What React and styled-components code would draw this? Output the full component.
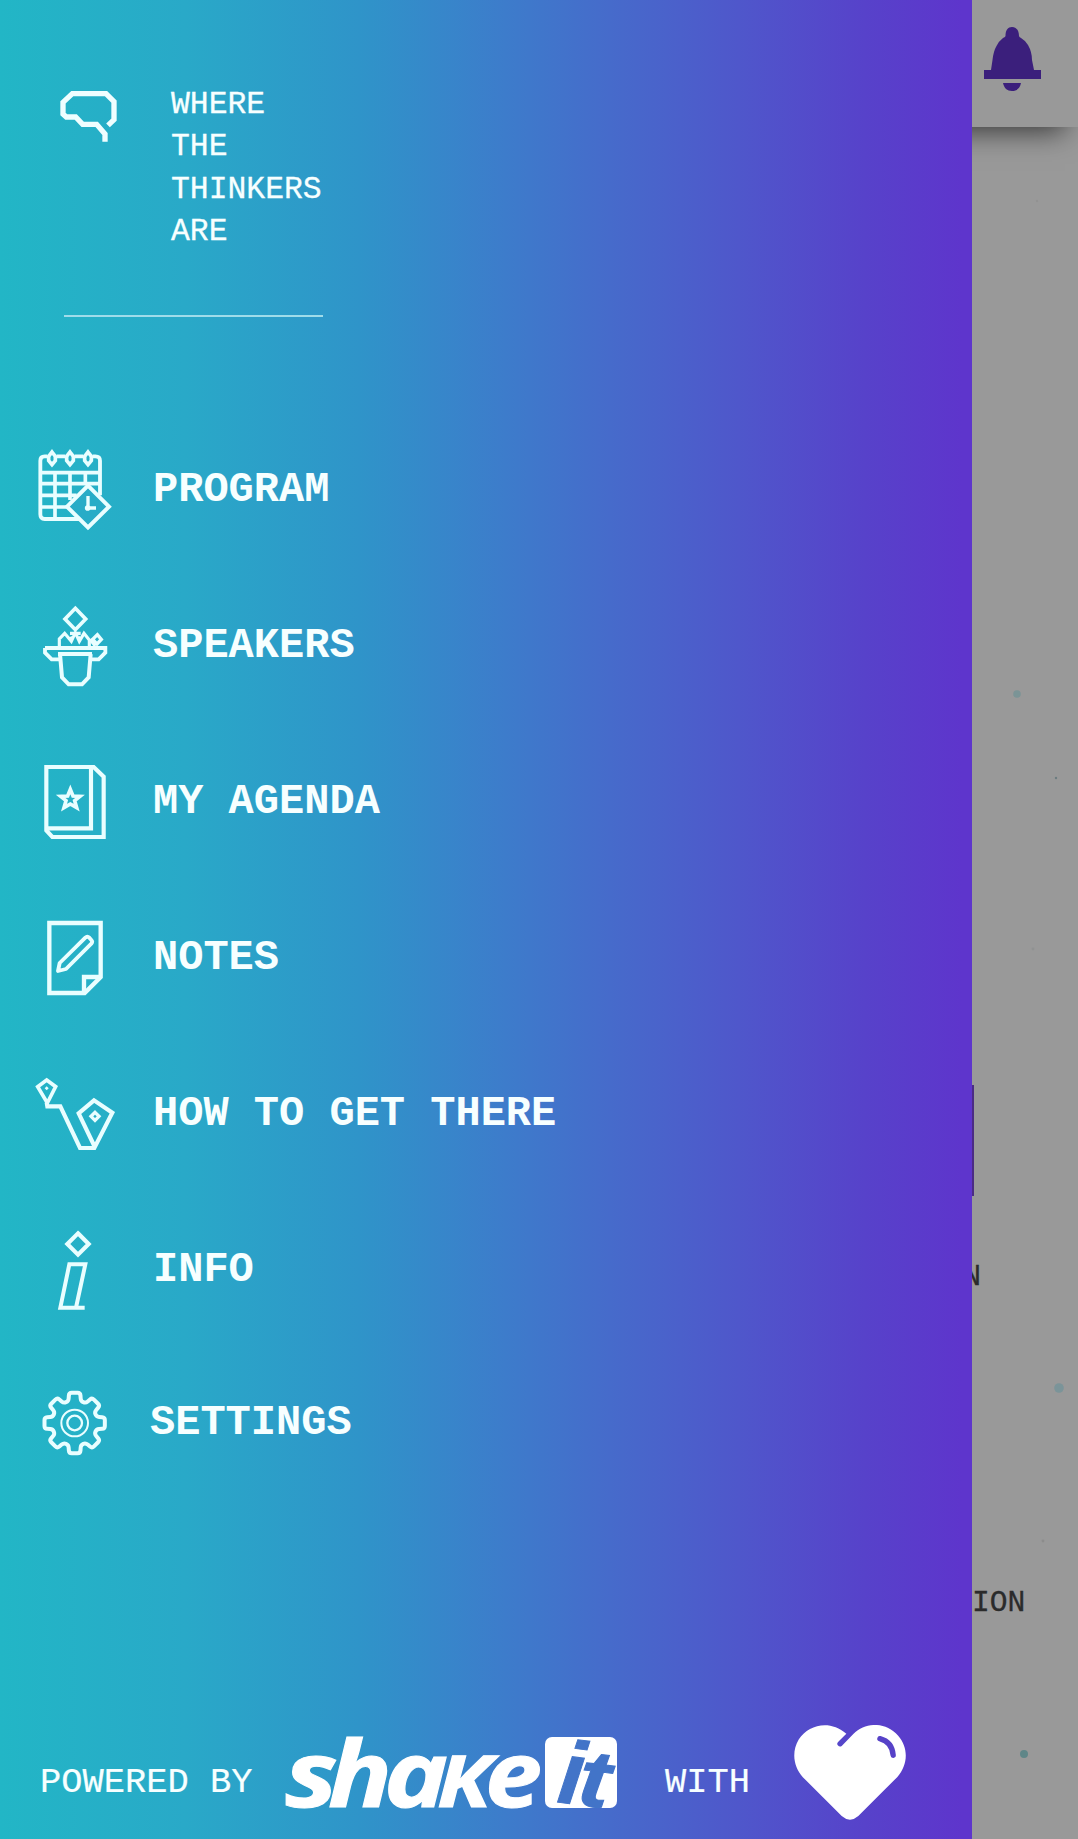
import React from "react";
import styled, { createGlobalStyle } from "styled-components";

const GlobalStyle = createGlobalStyle`
  html, body { margin: 0; padding: 0; background: #999; }
  * { box-sizing: border-box; }
`;

const mono = `"Liberation Mono", "Courier New", monospace`;

const Screen = styled.div`
  display: grid;
  grid-template-columns: 972px 1fr;
  width: 1078px;
  height: 1839px;
  overflow: hidden;
  background: #999;
  font-family: ${mono};
`;

const Drawer = styled.nav`
  position: relative;
  z-index: 2;
  display: flex;
  flex-direction: column;
  height: 1839px;
  color: #f7ffff;
  background: linear-gradient(90deg, #22b6c6 0%, #29a9c8 19%, #2f94c9 37%, #3d7ccb 52%, #4769cb 64%, #4f57cb 76%, #5742ca 89%, #5e35cc 99%);
`;

const Brand = styled.header`
  display: flex;
  align-items: flex-start;
  gap: 54px;
  width: 323px;
  height: 317px;
  margin-left: 60px;
  padding-top: 84px;
`;

const BrandIcon = styled.svg`
  flex: none;
  width: 57px;
  height: 52px;
  margin-top: 6px;
`;

const Tagline = styled.p`
  margin: 0;
  width: 160px;
  font-size: 31.4px;
  line-height: 42.3px;
  -webkit-text-stroke: 0.3px currentColor;
`;

const Divider = styled.hr`
  width: 259px;
  height: 2px;
  margin: -2px 0 0 64px;
  border: 0;
  background: #9fdcea;
`;

const Menu = styled.ul`
  list-style: none;
  margin: 92px 0 0;
  padding: 0 0 0 30px;
`;

const Item = styled.li`
  display: flex;
  align-items: center;
  gap: ${(p) => (p.$last ? 30 : 33)}px;
  height: ${(p) => (p.$last ? 150 : 156)}px;
`;

const ItemIcon = styled.svg`
  flex: none;
  width: 90px;
  height: 90px;
  overflow: visible;
  fill: none;
  stroke: #e9feff;
  stroke-width: 12.5;
`;

const Label = styled.span`
  padding-top: 5px;
  font-size: 42px;
  font-weight: 700;
  line-height: 48px;
  white-space: pre;
`;

const Footer = styled.footer`
  display: flex;
  align-items: flex-start;
  height: 114px;
  margin-top: auto;
  padding-left: 40px;
`;

const FooterText = styled.span`
  width: ${(p) => p.$width}px;
  margin-top: 40px;
  font-size: 35.4px;
  line-height: 36px;
  white-space: pre;
  -webkit-text-stroke: 0.2px currentColor;
`;

const Logo = styled.svg`
  flex: none;
  width: 350px;
  height: 95px;
  margin: 0 40px 0 22px;
  overflow: visible;
  font-family: "Open Sans", "Noto Sans", sans-serif;
  font-style: italic;
  font-weight: 700;
`;

const LogoSmallCap = styled.tspan`
  font-size: 71px;
  text-transform: uppercase;
`;

const LogoBadge = styled.g`
  fill: #4274c8;
  stroke: #4274c8;
  stroke-width: 1;
  font-family: "Liberation Sans", Arial, sans-serif;
`;

const Heart = styled.svg`
  flex: none;
  width: 112px;
  height: 95px;
  margin-left: 43px;
`;

const Page = styled.main`
  position: relative;
  display: flex;
  flex-direction: column;
  overflow: hidden;
`;

const TopBar = styled.div`
  flex: none;
  height: 127px;
  margin-left: -972px;
  padding: 27px 0 0 984px;
  background: #999;
  box-shadow: 0 17px 27px -13px rgba(0, 0, 0, 0.65);
`;

const Bell = styled.svg`
  display: block;
  width: 57px;
  height: 65px;
  fill: #3b1f7c;
`;

const CardEdge = styled.div`
  width: 2px;
  height: 111px;
  margin-top: 958px;
  background: #4b2b85;
`;

const CardLabel = styled.span`
  margin: ${(p) => p.$top}px 0 0 ${(p) => p.$left}px;
  font-size: 29.6px;
  line-height: 34px;
  color: #2b2b2b;
  -webkit-text-stroke: 0.3px currentColor;
`;

const Specks = styled.svg`
  position: absolute;
  inset: 0;
  width: 106px;
  height: 1839px;
`;

const rad = (d) => (d * Math.PI) / 180;

// Closed outline through the points, each corner rounded by the given radius.
const roundedOutline = (points, radius) => {
  const n = points.length;
  const toward = (a, b) => {
    const len = Math.hypot(b[0] - a[0], b[1] - a[1]);
    const k = Math.min(radius, len / 2) / len;
    return `${(a[0] + (b[0] - a[0]) * k).toFixed(1)} ${(a[1] + (b[1] - a[1]) * k).toFixed(1)}`;
  };
  return (
    points
      .map((p, i) => {
        const prev = points[(i + n - 1) % n];
        const next = points[(i + 1) % n];
        return `${i ? "L" : "M"}${toward(p, prev)}Q${p[0].toFixed(1)} ${p[1].toFixed(1)} ${toward(p, next)}`;
      })
      .join("") + "Z"
  );
};

const gearPath = roundedOutline(
  Array.from({ length: 8 }, (_, i) =>
    [[-16, 68], [-10.5, 92], [10.5, 92], [16, 68]].map(([a, r]) => {
      const t = rad(i * 45 + a - 90);
      return [164 + r * Math.cos(t), 609 + r * Math.sin(t)];
    })
  ).flat(),
  8
);

const items = [
  {
    label: "PROGRAM",
    box: "30 36 270 270",
    art: (
      <>
        <path d="M82 79H74Q61 79 61 92V253Q61 267 74 267H180M110 79H136M164 79H190M218 79H226Q240 79 240 92V196" strokeWidth="11.5" />
        <path d="M61 128H240M61 161H240M61 196H170M61 231H140M105 128V267M150 128V210M196 128V165" strokeWidth="11" />
        <path d="M96 66L106 79V92L96 104L86 92V79ZM150 66L160 79V92L150 104L140 92V79ZM204 66L214 79V92L204 104L194 92V79Z" strokeWidth="11" />
        <path d="M204 167L267 230L204 292L141 230Z" fill="#27acc7" strokeWidth="12" />
        <path d="M204 198V234H228" strokeWidth="10" />
        <circle cx="203" cy="234" r="5" strokeWidth="7" />
      </>
    ),
  },
  {
    label: "SPEAKERS",
    box: "30 24 270 270",
    art: (
      <>
        <path d="M166 55L197 87L166 119L135 87Z" strokeWidth="11" />
        <path d="M75 174H256V188L236 208H214M75 174V188L95 208H117" strokeWidth="11.5" />
        <path d="M114 192H216M120 192L126 262L146 283H186L206 262L212 192" strokeWidth="12" />
        <path d="M118 172V147L134 130L154 154L166 128L178 154L192 130L208 150V172M150 130H182M157 140L152 152M175 140L181 152" strokeWidth="9.5" />
        <path d="M232 134L244 148L231 162L218 148ZM210 148L226 168" strokeWidth="10" />
      </>
    ),
  },
  {
    label: "MY AGENDA",
    box: "30 12 270 270",
    art: (
      <>
        <path d="M79 51H213V235H79ZM213 51H221L251 80V261H97L79 241V228" />
        <path d="M151 118L159 138L180 139L164 152L170 173L151 162L132 173L138 152L122 139L143 138Z" strokeWidth="11" />
      </>
    ),
  },
  {
    label: "NOTES",
    box: "30 15 270 270",
    art: (
      <>
        <path d="M88 54H242V216L194 264H88Z" strokeWidth="13" />
        <path d="M192 264V216H242" strokeWidth="13" />
        <path d="M114 198L119 174L196 98Q202 92 208 98L214 105Q219 110 214 116L138 192Z" strokeWidth="11.5" strokeLinejoin="round" />
      </>
    ),
  },
  {
    label: "HOW TO GET THERE",
    box: "30 3 270 270",
    art: (
      <>
        <path d="M80 45L107 65L82 114L53 65Z" strokeWidth="11" />
        <path d="M80 112L82 124H121L180 249H223L277 143L222 106L176 145L223 243" strokeWidth="12.5" />
        <path d="M225 142L237 154L225 166L213 154Z" strokeWidth="10" />
        <path d="M80 64L86 70L80 76L74 70Z" fill="#e9feff" stroke="none" />
      </>
    ),
  },
  {
    label: "INFO",
    box: "30 6 270 270",
    art: (
      <>
        <path d="M174 40L206 72L174 104L142 72Z" />
        <path d="M194 263H121L148 133H196L168 263" strokeWidth="12" />
      </>
    ),
  },
  {
    label: "SETTINGS",
    box: "30 465 270 270",
    art: (
      <>
        <path d={gearPath} strokeWidth="12" />
        <circle cx="164" cy="609" r="40" strokeWidth="6" />
        <circle cx="164" cy="609" r="22" strokeWidth="7" />
      </>
    ),
  },
];

export default function App() {
  return (
    <>
      <GlobalStyle />
      <Screen>
        <Drawer>
          <Brand>
            <BrandIcon viewBox="90 60 171 156" fill="none" stroke="#effeff" strokeWidth="16">
              <path d="M234 166L252 149V95L228 71H127L99 97V132L109 141H137L158 163H200L225 192V215" />
            </BrandIcon>
            <Tagline>WHERE THE THINKERS ARE</Tagline>
          </Brand>
          <Divider />
          <Menu>
            {items.map((item, i) => (
              <Item key={item.label} $last={i === items.length - 1}>
                <ItemIcon viewBox={item.box}>{item.art}</ItemIcon>
                <Label>{item.label}</Label>
              </Item>
            ))}
          </Menu>
          <Footer>
            <FooterText $width={213}>POWERED BY</FooterText>
            <Logo viewBox="275 1725 350 95" fill="#fff">
              <text y="1807" fontSize="92" stroke="#fff" strokeWidth="1">
                <tspan x="285" textLength="53" lengthAdjust="spacingAndGlyphs">s</tspan>
                <tspan x="328" textLength="64" lengthAdjust="spacingAndGlyphs">h</tspan>
                <tspan x="384" textLength="64" lengthAdjust="spacingAndGlyphs">a</tspan>
                <LogoSmallCap x="437" textLength="54" lengthAdjust="spacingAndGlyphs">k</LogoSmallCap>
                <tspan x="485" textLength="57" lengthAdjust="spacingAndGlyphs">e</tspan>
              </text>
              <rect x="545" y="1737" width="72" height="71" rx="7" />
              <LogoBadge transform="rotate(7 580 1804)">
                <text y="1805">
                  <tspan x="556" fontSize="89">i</tspan>
                  <tspan x="576" fontSize="81" textLength="31" lengthAdjust="spacingAndGlyphs">t</tspan>
                </text>
              </LogoBadge>
            </Logo>
            <FooterText $width={86}>WITH</FooterText>
            <Heart viewBox="882 44 336 286">
              <path fill="#fff" d="M1039 70C990 27 925 42 896 87C873 125 880 170 908 201L1025 318Q1050 340 1075 318L1192 201C1225 165 1227 112 1195 76C1158 34 1098 34 1060 71L1025 107Q1019 111 1014 106Q1009 101 1014 95Z" />
              <path fill="none" stroke="#5742c8" strokeWidth="16" strokeLinecap="round" d="M1140 85Q1177 95 1180 135" />
            </Heart>
          </Footer>
        </Drawer>
        <Page>
          <TopBar>
            <Bell viewBox="0 0 57 65">
              <path d="M28 0C32 0 35 3 35 9Q35 10 37 11Q42 14 44 18Q48 25 48 33L50 43H57V52H0V43H7L8.500 33Q9.500 24 12.500 19Q15 14 19 11Q21.500 10 21.500 9C21.500 3 24 0 28 0ZM19 56H37C36 61 33 64 28 64S20 61 19 56Z" />
            </Bell>
          </TopBar>
          <CardEdge />
          <CardLabel $top={64} $left={-8.8}>N</CardLabel>
          <CardLabel $top={292} $left={0}>ION</CardLabel>
          <Specks>
            <circle cx="87" cy="1388" r="4.8" fill="#7b9499" />
            <circle cx="52" cy="1754" r="4" fill="#5f8688" />
            <circle cx="45" cy="694" r="3.8" fill="#7b9496" />
            <circle cx="84" cy="778" r="1.2" fill="#6c7c80" />
            <circle cx="71" cy="1541" r="1.4" fill="#8c8c8c" />
            <circle cx="61" cy="949" r="1.4" fill="#909292" />
            <circle cx="65" cy="201" r="1.2" fill="#929292" />
          </Specks>
        </Page>
      </Screen>
    </>
  );
}
